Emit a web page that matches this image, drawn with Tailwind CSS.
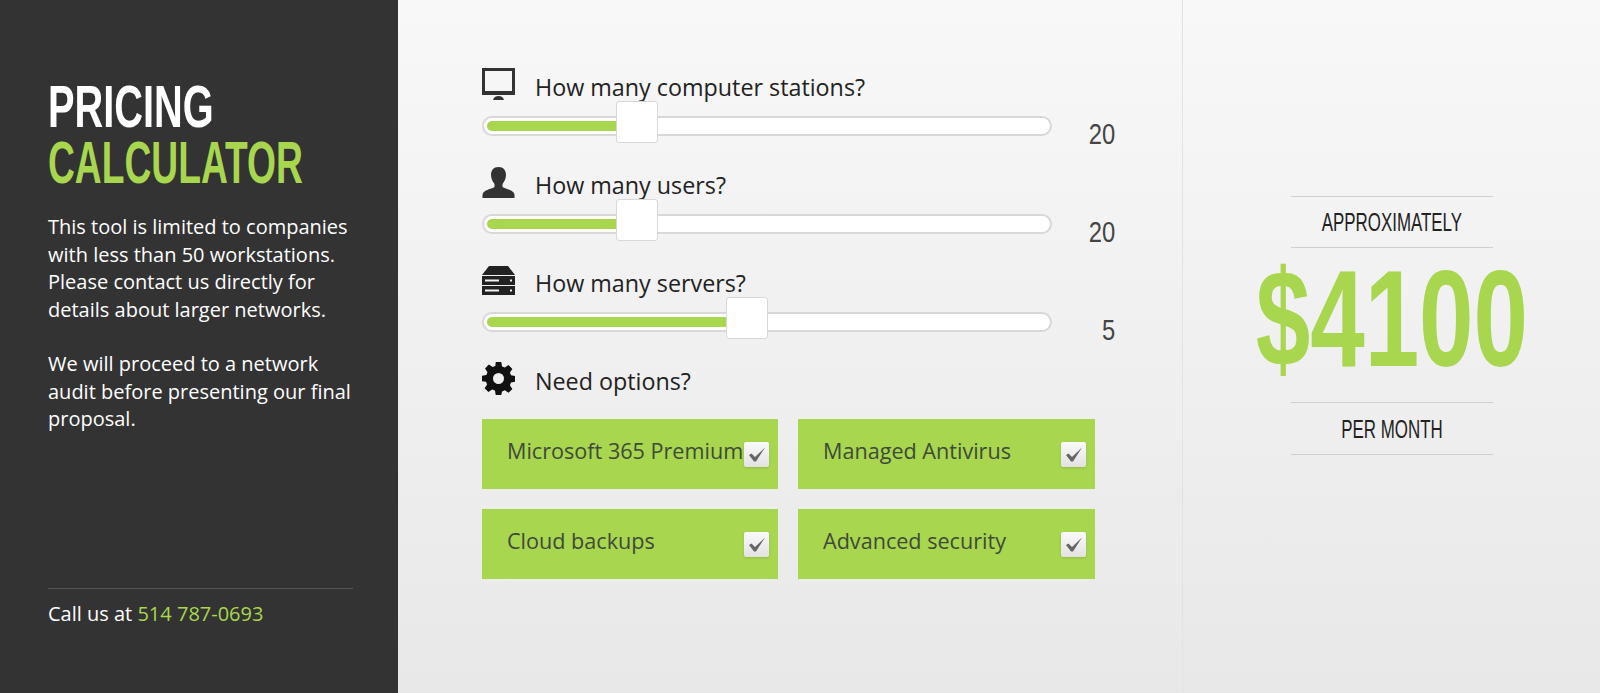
<!DOCTYPE html>
<html lang="en">
<head>
  <meta charset="UTF-8">
  <meta name="viewport" content="width=device-width, initial-scale=1.0">
  <title>Pricing Calculator</title>
  <script src="https://cdn.jsdelivr.net/npm/@tailwindcss/browser@4"></script>
</head>
<body class="h-[693px] overflow-hidden font-['Open_Sans',sans-serif]">
  <div class="flex h-[693px] bg-gradient-to-b from-[#f8f8f8] to-[#e8e8e8]">

    <!-- Sidebar -->
    <aside class="w-[398px] shrink-0 bg-[#333333] pl-[48px] pr-[45px] pt-[79px] text-white flex flex-col">
      <h1 class="font-['Liberation_Sans',sans-serif] font-bold text-[60px] leading-[56px] uppercase">
        <span class="block w-max origin-left scale-x-[0.663]">Pricing</span>
        <span class="block w-max origin-left scale-x-[0.62] text-[#a8d64e]">Calculator</span>
      </h1>
      <p class="mt-[22px] text-[20px] leading-[27.5px]">This tool is limited to companies with less than 50 workstations. Please contact us directly for details about larger networks.</p>
      <p class="mt-[27px] text-[20px] leading-[27.5px]">We will proceed to a network audit before presenting our final proposal.</p>
      <div class="mt-auto mb-[66px] border-t border-[#555555] pt-[11px] text-[20px] leading-[27px]">
        Call us at <span class="text-[#a8d64e]">514 787-0693</span>
      </div>
    </aside>

    <!-- Sliders and options -->
    <main class="w-[785px] shrink-0 border-r border-[#e3e3e3] pl-[84px] pt-[67px]">
      <section class="h-[98px]">
        <div class="flex items-center h-[34px] gap-[20px]">
          <svg class="w-[33px] h-[32px]" viewBox="0 0 33 32"><path fill-rule="evenodd" fill="#333" d="M0 0h33v27H0zM3 3v20h27V3z"/><path fill="#333" d="M11 32q1-4 5.500-4t5.500 4z"/></svg>
          <span class="mt-[6px] text-[23.300px] text-[#222]">How many computer stations?</span>
        </div>
        <div class="flex mt-[15px]">
          <div class="relative w-[570px] h-[20px] rounded-full border-2 border-[#d8d8d8] bg-white">
            <div class="absolute left-[3px] top-[3px] h-[10px] w-[132px] rounded-l-full bg-[#a8d64e]"></div>
            <div class="absolute left-[132px] top-[-17px] w-[42px] h-[42px] rounded-[3px] border border-[#d8d8d8] bg-white"></div>
          </div>
          <span class="w-[63px] pt-[1px] flex justify-end font-['Liberation_Sans',sans-serif] text-[29px] leading-[34px] text-[#444]"><span class="origin-right scale-x-[0.82]">20</span></span>
        </div>
      </section>

      <section class="h-[98px]">
        <div class="flex items-center h-[34px] gap-[20px]">
          <svg class="w-[33px] h-[31px]" viewBox="0 0 33 31"><path fill="#333" d="M16.500 0c5 0 7.500 3.500 7.500 8 0 4-2 7-3.500 9v3c3 2 12 3 12 8v3H0.500v-3c0-5 9-6 12-8v-3C11 15 9 12 9 8c0-4.500 2.500-8 7.500-8z"/></svg>
          <span class="mt-[6px] text-[23.300px] text-[#222]">How many users?</span>
        </div>
        <div class="flex mt-[15px]">
          <div class="relative w-[570px] h-[20px] rounded-full border-2 border-[#d8d8d8] bg-white">
            <div class="absolute left-[3px] top-[3px] h-[10px] w-[132px] rounded-l-full bg-[#a8d64e]"></div>
            <div class="absolute left-[132px] top-[-17px] w-[42px] h-[42px] rounded-[3px] border border-[#d8d8d8] bg-white"></div>
          </div>
          <span class="w-[63px] pt-[1px] flex justify-end font-['Liberation_Sans',sans-serif] text-[29px] leading-[34px] text-[#444]"><span class="origin-right scale-x-[0.82]">20</span></span>
        </div>
      </section>

      <section class="h-[98px]">
        <div class="flex items-center h-[34px] gap-[20px]">
          <svg class="w-[33px] h-[29px]" viewBox="0 0 33 29"><path fill="#222" d="M7 0h19l7 9H0z"/><path fill-rule="evenodd" fill="#222" d="M0 10h33v9H0zM3 13.500v2h14v-2zM28 13.500v2h2v-2zM0 20h33v9H0zM3 23.500v2h14v-2zM28 23.500v2h2v-2z"/></svg>
          <span class="mt-[6px] text-[23.300px] text-[#222]">How many servers?</span>
        </div>
        <div class="flex mt-[15px]">
          <div class="relative w-[570px] h-[20px] rounded-full border-2 border-[#d8d8d8] bg-white">
            <div class="absolute left-[3px] top-[3px] h-[10px] w-[242px] rounded-l-full bg-[#a8d64e]"></div>
            <div class="absolute left-[242px] top-[-17px] w-[42px] h-[42px] rounded-[3px] border border-[#d8d8d8] bg-white"></div>
          </div>
          <span class="w-[63px] pt-[1px] flex justify-end font-['Liberation_Sans',sans-serif] text-[29px] leading-[34px] text-[#444]"><span class="origin-right scale-x-[0.82]">5</span></span>
        </div>
      </section>

      <section>
        <div class="flex items-center h-[34px] gap-[20px]">
          <svg class="w-[33px] h-[33px]" viewBox="0 0 24 24"><path fill="#111" fill-rule="evenodd" d="M10 0h4l.6 3.200 2 .8L19.300 2.200l2.800 2.800-1.800 2.700.8 2 3.200.6v4l-3.200.6-.8 2 1.800 2.700-2.800 2.800-2.700-1.800-2 .8L14 24h-4l-.6-3.200-2-.8-2.700 1.800-2.800-2.800 1.800-2.700-.8-2L0 14v-4l3.200-.6.8-2L2.200 4.700 5 1.900l2.700 1.800 2-.8zM12 8a4 4 0 1 0 0 8 4 4 0 0 0 0-8z"/></svg>
          <span class="mt-[6px] text-[23.300px] text-[#222]">Need options?</span>
        </div>
        <div class="grid grid-cols-[296px_297px] gap-x-[20px] gap-y-[20px] mt-[24px]">
          <label class="flex items-center justify-between h-[70px] bg-[#a8d64e] pl-[25px] pr-[9px] text-[21.600px] text-[#3f4a3a]">
            <span class="-mt-[6px] whitespace-nowrap">Microsoft 365 Premium</span>
            <span class="shrink-0 flex items-center justify-center w-[25px] h-[25px] rounded-[2px] bg-gradient-to-b from-[#fafafa] to-[#e2e2e2] shadow-sm"><svg class="w-[20px] h-[20px]" viewBox="0 0 20 20"><path fill="#666" d="M2 11l2.500-1.500L8 13 18 3.500 9 17.500h-2z"/></svg></span>
          </label>
          <label class="flex items-center justify-between h-[70px] bg-[#a8d64e] pl-[25px] pr-[9px] text-[21.600px] text-[#3f4a3a]">
            <span class="-mt-[6px] whitespace-nowrap">Managed Antivirus</span>
            <span class="shrink-0 flex items-center justify-center w-[25px] h-[25px] rounded-[2px] bg-gradient-to-b from-[#fafafa] to-[#e2e2e2] shadow-sm"><svg class="w-[20px] h-[20px]" viewBox="0 0 20 20"><path fill="#666" d="M2 11l2.500-1.500L8 13 18 3.500 9 17.500h-2z"/></svg></span>
          </label>
          <label class="flex items-center justify-between h-[70px] bg-[#a8d64e] pl-[25px] pr-[9px] text-[21.600px] text-[#3f4a3a]">
            <span class="-mt-[6px] whitespace-nowrap">Cloud backups</span>
            <span class="shrink-0 flex items-center justify-center w-[25px] h-[25px] rounded-[2px] bg-gradient-to-b from-[#fafafa] to-[#e2e2e2] shadow-sm"><svg class="w-[20px] h-[20px]" viewBox="0 0 20 20"><path fill="#666" d="M2 11l2.500-1.500L8 13 18 3.500 9 17.500h-2z"/></svg></span>
          </label>
          <label class="flex items-center justify-between h-[70px] bg-[#a8d64e] pl-[25px] pr-[9px] text-[21.600px] text-[#3f4a3a]">
            <span class="-mt-[6px] whitespace-nowrap">Advanced security</span>
            <span class="shrink-0 flex items-center justify-center w-[25px] h-[25px] rounded-[2px] bg-gradient-to-b from-[#fafafa] to-[#e2e2e2] shadow-sm"><svg class="w-[20px] h-[20px]" viewBox="0 0 20 20"><path fill="#666" d="M2 11l2.500-1.500L8 13 18 3.500 9 17.500h-2z"/></svg></span>
          </label>
        </div>
      </section>
    </main>

    <!-- Price -->
    <section class="flex-1 flex flex-col items-center pt-[196px] font-['Liberation_Sans',sans-serif] uppercase">
      <div class="w-[202px] h-[52px] flex items-center justify-center border-y border-[#cfcfcf] text-[26px] text-[#222]"><span class="scale-x-[0.65]">Approximately</span></div>
      <div class="h-[154px] flex items-center font-bold text-[138px] leading-none text-[#a8d64e]"><span class="mb-[14px] scale-x-[0.71]">$4100</span></div>
      <div class="w-[202px] h-[53px] pt-[2px] flex items-center justify-center border-y border-[#cfcfcf] text-[26px] text-[#222]"><span class="scale-x-[0.65]">Per month</span></div>
    </section>
  </div>
</body>
</html>
